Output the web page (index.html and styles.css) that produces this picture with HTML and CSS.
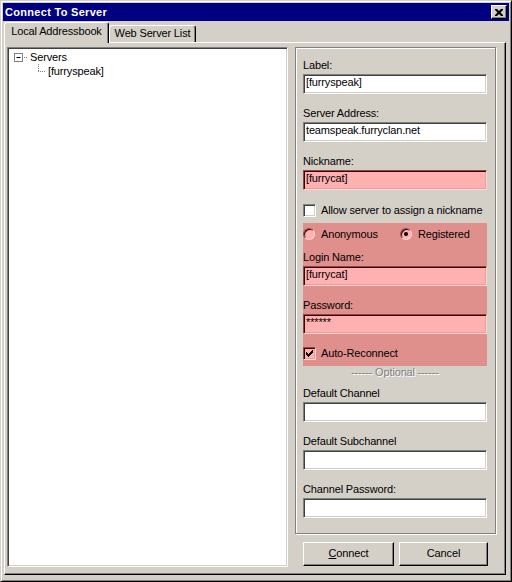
FILE: index.html
```html
<!DOCTYPE html>
<html lang="en">
<head>
    <meta charset="UTF-8">
    <title>Connect To Server</title>
    <link rel="stylesheet" href="styles.css">
</head>
<body>
    <div class="window">
        <div class="titlebar">
            <span class="title">Connect To Server</span>
            <span class="close-btn">
                <svg width="8" height="7" viewBox="0 0 8 7"><path d="M0 0h2l2 2 2-2h2v1l-2.5 2.5 2.5 2.5v1h-2l-2-2-2 2h-2v-1l2.5-2.5-2.5-2.5z" fill="#000"/></svg>
            </span>
        </div>
        <div class="tabs">
            <div class="tab active">Local Addressbook</div>
            <div class="tab">Web Server List</div>
        </div>
        <div class="tab-page">
            <div class="tree">
                <div class="tree-row">
                    <svg class="tree-lines" width="21" height="14" viewBox="0 0 21 14">
                        <rect x="5.5" y="3.5" width="8" height="8" fill="#fff" stroke="#808080"/>
                        <path d="M7.5 7.5h4" stroke="#000"/>
                        <path d="M15 7.5h4" stroke="#808080" stroke-dasharray="1 1"/>
                    </svg>
                    <span>Servers</span>
                </div>
                <div class="tree-row">
                    <svg class="tree-lines" width="39" height="14" viewBox="0 0 39 14">
                        <path d="M29.5 0v7" stroke="#808080" stroke-dasharray="1 1"/>
                        <path d="M29 7.5h8" stroke="#808080" stroke-dasharray="1 1"/>
                    </svg>
                    <span>[furryspeak]</span>
                </div>
            </div>
            <div class="side">
                <div class="panel">
                    <div class="field">
                        <div class="label">Label:</div>
                        <div class="edit">[furryspeak]</div>
                    </div>
                    <div class="field next">
                        <div class="label">Server Address:</div>
                        <div class="edit">teamspeak.furryclan.net</div>
                    </div>
                    <div class="field next">
                        <div class="label">Nickname:</div>
                        <div class="edit pink">[furrycat]</div>
                    </div>
                    <div class="check-row first">
                        <span class="checkbox"></span>
                        <span>Allow server to assign a nickname</span>
                    </div>
                    <div class="login-box">
                        <div class="radio-row">
                            <span class="radio-item"><span class="radio"></span>Anonymous</span>
                            <span class="radio-item"><span class="radio checked"></span>Registered</span>
                        </div>
                        <div class="field login">
                            <div class="label">Login Name:</div>
                            <div class="edit pink">[furrycat]</div>
                        </div>
                        <div class="field next">
                            <div class="label">Password:</div>
                            <div class="edit pink">******</div>
                        </div>
                        <div class="check-row">
                            <span class="checkbox pink">
                                <svg width="7" height="7" viewBox="0 0 7 7"><path d="M0 2h1v1h1v1h1v-1h1v-1h1v-1h1v-1h1v3h-1v1h-1v1h-1v1h-1v1h-1v-1h-1v-1h-1v-1h-1z" fill="#000"/></svg>
                            </span>
                            <span>Auto-Reconnect</span>
                        </div>
                    </div>
                    <div class="optional">------ Optional ------</div>
                    <div class="field channel">
                        <div class="label">Default Channel</div>
                        <div class="edit"></div>
                    </div>
                    <div class="field next">
                        <div class="label">Default Subchannel</div>
                        <div class="edit"></div>
                    </div>
                    <div class="field next">
                        <div class="label">Channel Password:</div>
                        <div class="edit"></div>
                    </div>
                </div>
                <div class="buttons">
                    <div class="btn connect"><u>C</u>onnect</div>
                    <div class="btn cancel">Cancel</div>
                </div>
            </div>
        </div>
    </div>
</body>
</html>
```

FILE: styles.css
```css
body {
    margin: 0;
    background: #d4d0c8;
    font-family: "Liberation Sans", Arial, sans-serif;
    font-size: 11px;
    letter-spacing: -0.15px;
    color: #000;
}
.window {
    width: 512px;
    height: 582px;
    box-sizing: border-box;
    border: 1px solid;
    border-color: #d4d0c8 #000 #000 #d4d0c8;
    box-shadow: inset 1px 1px #fff, inset -1px -1px #808080;
    padding: 2px;
}
.titlebar {
    height: 18px;
    background: #000080;
    color: #fff;
    display: flex;
    align-items: center;
    justify-content: space-between;
    padding: 0 2px;
}
.title {
    font-weight: bold;
    letter-spacing: 0.3px;
}
.close-btn {
    width: 16px;
    height: 14px;
    box-sizing: border-box;
    background: #d4d0c8;
    border: 1px solid;
    border-color: #fff #000 #000 #fff;
    box-shadow: inset -1px -1px #808080;
    display: flex;
    align-items: center;
    justify-content: center;
}
.tabs {
    display: flex;
    align-items: flex-end;
    height: 21px;
    padding-left: 1px;
    position: relative;
    z-index: 1;
}
.tab {
    box-sizing: border-box;
    width: 87px;
    height: 17px;
    border: 1px solid;
    border-bottom: none;
    border-color: #fff #000 transparent #fff;
    box-shadow: inset -1px 0 #808080;
    border-radius: 3px 3px 0 0;
    text-align: center;
    line-height: 14px;
}
.tab.active {
    width: 105px;
    height: 21px;
    margin-bottom: -1px;
    background: #d4d0c8;
    padding-top: 1px;
}
.tab-page {
    box-sizing: border-box;
    width: 502px;
    height: 533px;
    margin-left: 1px;
    border: 1px solid;
    border-color: #fff #000 #000 #fff;
    box-shadow: inset -1px -1px #808080;
    padding: 4px 0 0 2px;
    display: flex;
}
.tree {
    box-sizing: border-box;
    width: 281px;
    height: 520px;
    background: #fff;
    border: 1px solid;
    border-color: #808080 #fff #fff #808080;
    box-shadow: inset 1px 1px #404040, inset -1px -1px #d4d0c8;
    padding-top: 2px;
    padding-left: 1px;
}
.tree-row {
    display: flex;
    height: 14px;
    line-height: 14px;
}
.tree-lines {
    flex: none;
}
.side {
    margin-left: 7px;
    display: flex;
    flex-direction: column;
}
.panel {
    box-sizing: border-box;
    width: 201px;
    height: 487px;
    border: 1px solid #808080;
    box-shadow: inset 1px 1px #fff, 1px 1px #fff;
    padding: 10px 8px 0 7px;
}
.label {
    line-height: 14px;
    margin-bottom: 2px;
}
.field.next {
    margin-top: 12px;
}
.edit {
    box-sizing: border-box;
    height: 20px;
    background: #fff;
    border: 1px solid;
    border-color: #808080 #fff #fff #808080;
    box-shadow: inset 1px 1px #404040, inset -1px -1px #d4d0c8;
    padding: 1px 2px 0;
    line-height: 13px;
    white-space: nowrap;
}
.edit.pink {
    background: #ffb0b0;
    border-color: #8c4a48 #ffd4d4 #ffd4d4 #8c4a48;
    box-shadow: inset 1px 1px #400000, inset -1px -1px #e8a09c;
}
.check-row {
    display: flex;
    align-items: center;
    height: 13px;
    line-height: 13px;
    margin-top: 13px;
}
.check-row.first {
    margin-top: 14px;
}
.checkbox {
    box-sizing: border-box;
    width: 13px;
    height: 13px;
    margin-right: 5px;
    background: #fff;
    border: 1px solid;
    border-color: #808080 #fff #fff #808080;
    box-shadow: inset 1px 1px #404040, inset -1px -1px #d4d0c8;
    display: flex;
    align-items: center;
    justify-content: center;
}
.checkbox.pink {
    background: #ffb0b0;
    border-color: #8c4a48 #ffd4d4 #ffd4d4 #8c4a48;
    box-shadow: inset 1px 1px #400000, inset -1px -1px #e8a09c;
}
.login-box {
    background: #e0908c;
    margin-top: 6px;
    padding: 5px 0 6px;
}
.radio-row {
    display: flex;
    height: 12px;
    line-height: 12px;
}
.radio-item {
    flex: none;
    display: flex;
    align-items: center;
    width: 97px;
}
.radio-item + .radio-item {
    width: auto;
}
.radio {
    box-sizing: border-box;
    width: 12px;
    height: 12px;
    margin-right: 6px;
    border-radius: 50%;
    background: #ffb0b0;
    border: 1px solid;
    border-color: #8c4a48 #ffd4d4 #ffd4d4 #8c4a48;
    box-shadow: inset 1px 1px #400000;
    display: flex;
    align-items: center;
    justify-content: center;
}
.radio.checked::after {
    content: "";
    width: 4px;
    height: 4px;
    border-radius: 50%;
    background: #000;
}
.field.login {
    margin-top: 10px;
}
.optional {
    text-align: center;
    line-height: 12px;
    color: #808080;
    text-shadow: 1px 1px 0 #fff;
}
.field.channel {
    margin-top: 8px;
}
.buttons {
    display: flex;
    gap: 5px;
    margin-top: 8px;
    padding-left: 8px;
}
.btn {
    box-sizing: border-box;
    height: 24px;
    border: 1px solid;
    border-color: #fff #000 #000 #fff;
    box-shadow: inset -1px -1px #808080;
    text-align: center;
    line-height: 20px;
}
.btn.connect {
    width: 91px;
}
.btn.cancel {
    width: 89px;
}
```
